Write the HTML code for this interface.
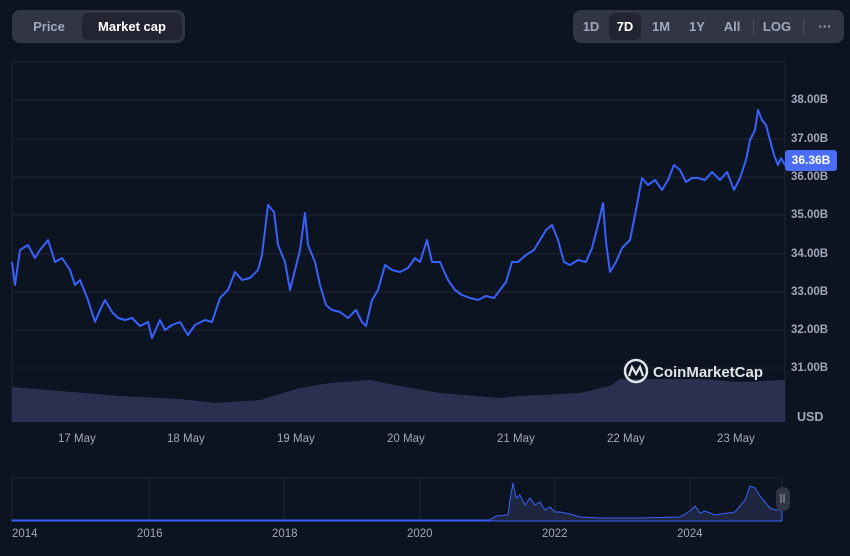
<!DOCTYPE html><html><head><style>
body{margin:0;width:850px;height:556px;background:#0d1421;font-family:"Liberation Sans",sans-serif;overflow:hidden;position:relative;color:#a1a7bb}
.grp{position:absolute;top:10px;height:33px;background:#323546;border-radius:8px;box-sizing:border-box}
.b{position:absolute;top:3px;height:27px;line-height:27px;font-size:13px;font-weight:bold;text-align:center;border-radius:6px;color:#a1a7bb}
.on{background:#222531;color:#fff}
.yl{position:absolute;left:791px;font-size:11.5px;font-weight:bold;color:#a1a7bb}
.xl{position:absolute;top:433px;font-size:11.5px;color:#a1a7bb}
.nl{position:absolute;top:528px;font-size:11.5px;color:#a1a7bb}
</style></head><body>
<div class="grp" style="left:12px;width:173px"><div class="b" style="left:4px;width:66px">Price</div><div class="b on" style="left:70px;width:100px">Market cap</div></div>
<div class="grp" style="left:573px;width:271px">
<div class="b" style="left:4px;width:28px">1D</div><div class="b on" style="left:36px;width:32px">7D</div><div class="b" style="left:72px;width:32px">1M</div><div class="b" style="left:108px;width:32px">1Y</div><div class="b" style="left:144px;width:30px">All</div>
<div style="position:absolute;left:180px;top:9px;width:1px;height:16px;background:#4a4d5e"></div>
<div class="b" style="left:184px;width:40px">LOG</div>
<div style="position:absolute;left:230px;top:9px;width:1px;height:16px;background:#4a4d5e"></div>
<div class="b" style="left:236px;width:32px">···</div></div>
<svg width="850" height="556" style="position:absolute;left:0;top:0">
<g stroke="#222531" stroke-width="1">
<line x1="12" y1="62" x2="785" y2="62"/><line x1="12" y1="62" x2="12" y2="422"/><line x1="785" y1="62" x2="785" y2="422"/>
<line x1="12" y1="100" x2="785" y2="100"/><line x1="12" y1="139" x2="785" y2="139"/><line x1="12" y1="177" x2="785" y2="177"/><line x1="12" y1="215" x2="785" y2="215"/><line x1="12" y1="254" x2="785" y2="254"/><line x1="12" y1="292" x2="785" y2="292"/><line x1="12" y1="330" x2="785" y2="330"/><line x1="12" y1="368" x2="785" y2="368"/>
</g>
<polygon fill="#2a3150" points="12,422 12,387 60,391 120,396 180,399 215,403 260,400 300,388 330,383 370,380 400,386 440,393 500,398 520,396 580,393 610,386 620,379 700,379 740,382 785,380 785,422"/>
<polyline fill="none" stroke="#3861fb" stroke-width="2" stroke-linejoin="round" points="12,262 15,285 20,250 28,245 35,258 40,250 48,240 55,262 62,258 70,270 75,285 80,280 88,300 95,322 100,310 105,300 112,312 118,318 125,320 132,318 140,326 148,322 152,338 160,320 165,330 172,325 180,322 188,335 195,325 205,320 212,322 220,298 228,290 235,272 242,280 250,278 258,270 262,255 268,205 274,212 278,245 285,262 290,290 295,270 300,250 305,213 308,245 315,262 320,285 326,305 332,310 340,312 348,318 356,310 362,322 366,326 372,300 378,290 385,265 392,270 400,272 408,268 415,258 420,262 427,240 432,262 440,262 448,280 455,290 462,295 470,298 478,300 486,296 494,298 500,290 506,282 512,262 518,262 526,255 534,250 540,240 546,230 552,225 558,240 564,262 570,265 578,260 586,262 592,248 598,225 603,203 606,242 610,272 616,262 622,248 630,240 636,210 642,178 648,185 655,180 662,190 668,180 674,165 680,170 686,182 692,178 698,178 705,180 712,172 720,180 727,172 734,190 740,178 746,160 750,140 755,130 758,110 762,120 766,125 770,140 774,155 778,165 781,158 785,165"/>
<g stroke="#222531"><rect x="12" y="478" width="770" height="43" fill="none"/>
<line x1="149" y1="478" x2="149" y2="521"/><line x1="284" y1="478" x2="284" y2="521"/><line x1="420" y1="478" x2="420" y2="521"/><line x1="555" y1="478" x2="555" y2="521"/><line x1="690" y1="478" x2="690" y2="521"/></g>
<polygon fill="#1f2640" stroke="#3861fb" stroke-width="1" points="12,521 12,520 490,520 496,516 508,515 510,500 513,483 516,498 520,495 525,505 530,498 535,505 540,502 545,510 550,507 555,512 560,512 570,514 580,517 600,518 640,518 680,517 690,511 695,506 700,513 705,511 715,515 735,512 745,500 750,486 755,488 760,496 765,502 770,508 775,510 782,510 782,521"/>
<circle cx="636" cy="371" r="11" fill="none" stroke="#e0e3ea" stroke-width="2.5"/>
<path d="M629,376 L632,367 L636,374 L640,367 L643,376" fill="none" stroke="#e0e3ea" stroke-width="2.2"/>
<text x="653" y="377" fill="#e0e3ea" font-size="15" font-weight="bold" font-family="Liberation Sans">CoinMarketCap</text>
<rect x="776" y="487" width="14" height="24" rx="7" fill="#323546"/>
<line x1="781" y1="494" x2="781" y2="503" stroke="#a1a7bb"/><line x1="784" y1="494" x2="784" y2="503" stroke="#a1a7bb"/>
</svg>
<div class="yl" style="top:94px">38.00B</div><div class="yl" style="top:133px">37.00B</div><div class="yl" style="top:171px">36.00B</div><div class="yl" style="top:209px">35.00B</div><div class="yl" style="top:248px">34.00B</div><div class="yl" style="top:286px">33.00B</div><div class="yl" style="top:324px">32.00B</div><div class="yl" style="top:362px">31.00B</div>
<div class="yl" style="top:410px;left:797px;font-size:12.5px">USD</div>
<div style="position:absolute;left:785px;top:150px;width:52px;height:21px;background:#4a6cf7;border-radius:3px;color:#fff;font-size:12px;font-weight:bold;line-height:21px;text-align:center">36.36B</div>
<div class="xl" style="left:58px">17 May</div><div class="xl" style="left:167px">18 May</div><div class="xl" style="left:277px">19 May</div><div class="xl" style="left:387px">20 May</div><div class="xl" style="left:497px">21 May</div><div class="xl" style="left:607px">22 May</div><div class="xl" style="left:717px">23 May</div>
<div class="nl" style="left:12px">2014</div><div class="nl" style="left:137px">2016</div><div class="nl" style="left:272px">2018</div><div class="nl" style="left:407px">2020</div><div class="nl" style="left:542px">2022</div><div class="nl" style="left:677px">2024</div>
</body></html>
